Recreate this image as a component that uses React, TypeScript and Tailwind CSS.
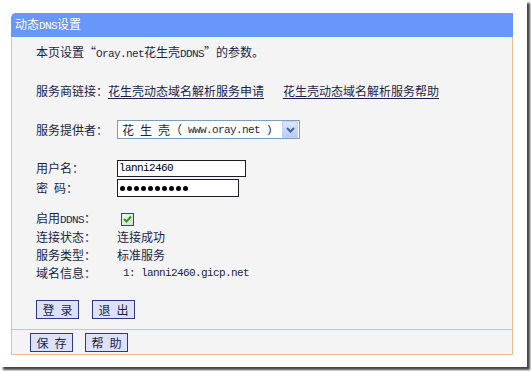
import React from 'react';

// half-width latin text, SimSun-like 6px cells
const L: React.FC<{ children: React.ReactNode }> = ({ children }) => (
  <span className="font-['Liberation_Mono',monospace] text-[11px] tracking-[-0.6px] whitespace-pre">{children}</span>
);

const Btn: React.FC<{ a: string; b: string }> = ({ a, b }) => (
  <div className="w-[43px] h-[19px] border border-[#2c3a86] bg-[#dde1fb] flex items-center justify-center gap-[6px] leading-none">
    <span>{a}</span>
    <span>{b}</span>
  </div>
);

const Row: React.FC<{ label: React.ReactNode; h?: string; children?: React.ReactNode }> = ({ label, h = 'h-[18px]', children }) => (
  <div className={`flex items-center ${h}`}>
    <div className="w-[81px] shrink-0">{label}</div>
    {children}
  </div>
);

export default function App() {
  return (
    <div className="w-[531px] h-[371px] bg-white font-['Noto_Sans_CJK_SC',sans-serif] text-[12px] leading-4 text-[#1b1f4a]">
      <div className="w-[527px] h-[367px] bg-white shadow-[3px_3px_2px_rgba(40,40,40,0.85)] pt-[13px] pl-[11px]">
        <div className="w-[502px]">
          <div className="h-[24px] bg-[#6797f8] rounded-tl-[5px] flex items-center pl-[4px] text-white">
            <span>动态<L>DNS</L>设置</span>
          </div>

          <div className="h-[292px] border-x border-[#e6c08f] bg-[#f4f4f4] pl-[24px] pt-[7px] flex flex-col">
            <div className="h-4">
              本页设置“<L>Oray.net</L>花生壳<L>DDNS</L>”的参数。
            </div>

            <div className="h-4 mt-[23px] flex">
              <span>服务商链接：</span>
              <a href="#" className="underline underline-offset-2">花生壳动态域名解析服务申请</a>
              <a href="#" className="underline underline-offset-2 ml-[19px]">花生壳动态域名解析服务帮助</a>
            </div>

            <div className="mt-[21px]">
              <Row label="服务提供者：" h="h-[19px]">
                <div className="w-[183px] h-[19px] border border-[#7f9db9] bg-white flex items-center pl-[4px] pr-[1px]">
                  <span>花</span>
                  <span className="ml-[6px]">生</span>
                  <span className="ml-[6px]">壳</span>
                  <span>（</span>
                  <L> www.oray.net )</L>
                  <div className="ml-auto w-[16px] h-[17px] bg-gradient-to-b from-[#dbe5fd] to-[#b8cbf7] border border-[#c3d3f7] flex items-center justify-center">
                    <svg width="9" height="6" viewBox="0 0 9 6">
                      <path d="M1 1 L4.5 4.5 L8 1" fill="none" stroke="#4d5f8a" strokeWidth="2" />
                    </svg>
                  </div>
                </div>
              </Row>
            </div>

            <div className="mt-[20px]">
              <Row label="用户名：">
                <div className="w-[129px] h-[17px] border border-[#1c1c2c] bg-white flex items-center pl-[1px] text-black">
                  <L>lanni2460</L>
                </div>
              </Row>
            </div>
            <div className="mt-[2px]">
              <Row label={<span>密<span className="ml-[6px]">码：</span></span>}>
                <div className="w-[122px] h-[18px] border border-[#1c1c2c] bg-white flex items-center pl-[2px] gap-[2px]">
                  {Array.from({ length: 10 }).map((_, i) => (
                    <span key={i} className="w-[5px] h-[5px] rounded-full bg-black" />
                  ))}
                </div>
              </Row>
            </div>

            <div className="mt-[13px] flex flex-col">
              <Row label={<span>启用<L>DDNS</L>：</span>}>
                <div className="ml-[4px] w-[13px] h-[13px] border border-[#1c5180] bg-gradient-to-br from-[#f4f4f0] to-[#dcdcd4] flex items-center justify-center">
                  <svg width="9" height="8" viewBox="0 0 9 8">
                    <path d="M1 4 L3.5 6.5 L8 1.5" fill="none" stroke="#21a121" strokeWidth="2" />
                  </svg>
                </div>
              </Row>
              <Row label="连接状态：">连接成功</Row>
              <Row label="服务类型：">标准服务</Row>
              <Row label="域名信息：">
                <L> 1: lanni2460.gicp.net</L>
              </Row>
            </div>

            <div className="mt-[18px] flex gap-[13px]">
              <Btn a="登" b="录" />
              <Btn a="退" b="出" />
            </div>
          </div>

          <div className="h-[26px] border border-[#e6c08f] bg-[#f4f4f4] pl-[18px] pt-[3px] flex gap-[12px]">
            <Btn a="保" b="存" />
            <Btn a="帮" b="助" />
          </div>
        </div>
      </div>
    </div>
  );
}
